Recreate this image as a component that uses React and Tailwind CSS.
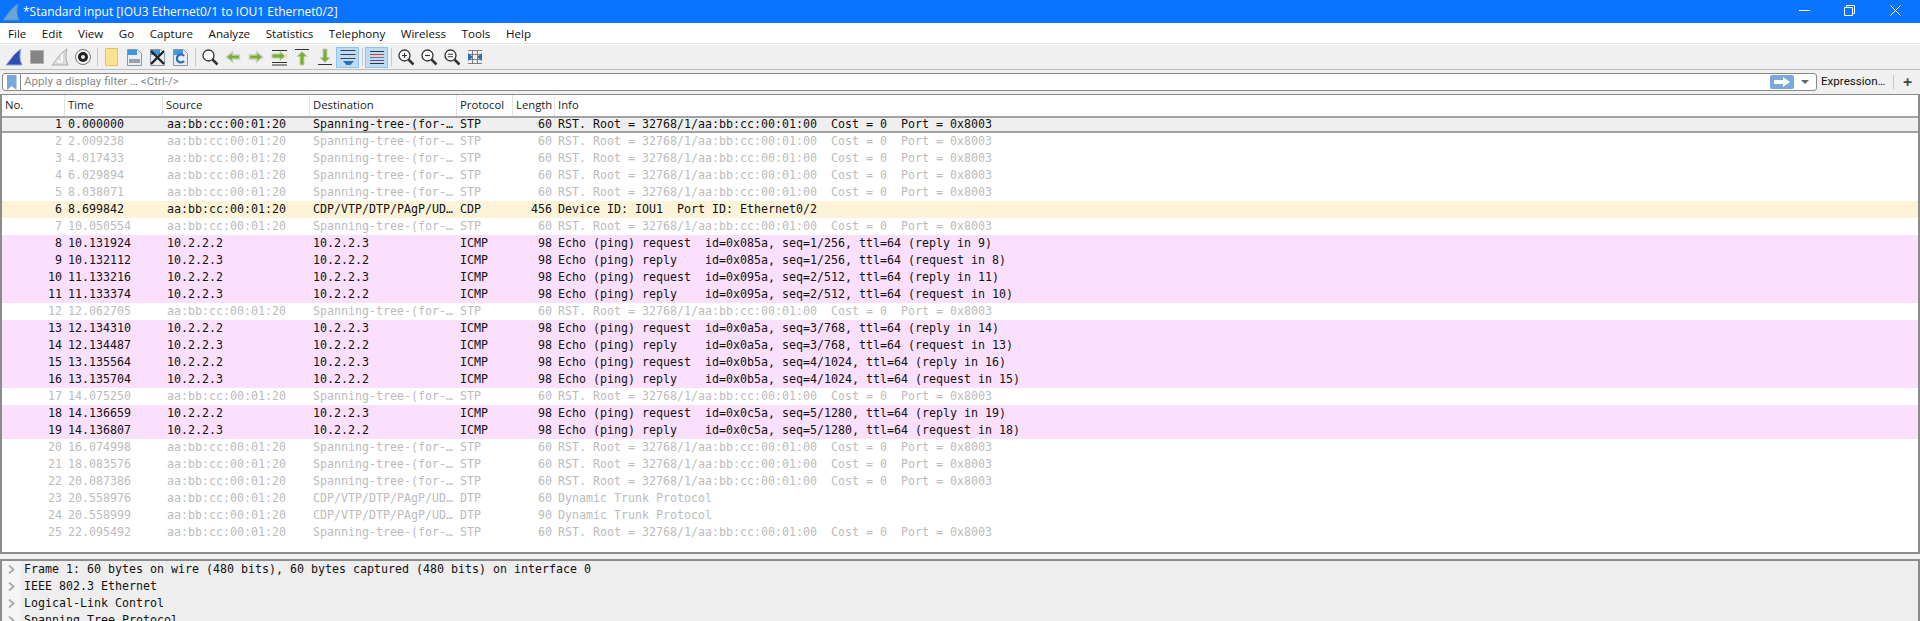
import React from 'react';

const MONO = "font-['DejaVu_Sans_Mono',monospace]";
const UI = "font-['Open_Sans',sans-serif]";
const NARROW = "font-['Roboto',sans-serif]";

const stp = (no, time) => ({
  no, time, src: 'aa:bb:cc:00:01:20', dst: 'Spanning-tree-(for-…', proto: 'STP', len: 60, kind: 'stp',
  info: 'RST. Root = 32768/1/aa:bb:cc:00:01:00  Cost = 0  Port = 0x8003',
});
const ping = (no, time, type, id, seq, ref) => {
  const req = type === 'request';
  return {
    no, time, src: req ? '10.2.2.2' : '10.2.2.3', dst: req ? '10.2.2.3' : '10.2.2.2', proto: 'ICMP', len: 98, kind: 'icmp',
    info: `Echo (ping) ${req ? 'request' : 'reply  '}  id=${id}, seq=${seq}, ttl=64 (${req ? 'reply' : 'request'} in ${ref})`,
  };
};
const dtp = (no, time, len) => ({
  no, time, src: 'aa:bb:cc:00:01:20', dst: 'CDP/VTP/DTP/PAgP/UD…', proto: 'DTP', len, kind: 'stp', info: 'Dynamic Trunk Protocol',
});

const packets = [
  { ...stp(1, '0.000000'), kind: 'selected' },
  stp(2, '2.009238'),
  stp(3, '4.017433'),
  stp(4, '6.029894'),
  stp(5, '8.038071'),
  { no: 6, time: '8.699842', src: 'aa:bb:cc:00:01:20', dst: 'CDP/VTP/DTP/PAgP/UD…', proto: 'CDP', len: 456, kind: 'cdp', info: 'Device ID: IOU1  Port ID: Ethernet0/2' },
  stp(7, '10.050554'),
  ping(8, '10.131924', 'request', '0x085a', '1/256', 9),
  ping(9, '10.132112', 'reply', '0x085a', '1/256', 8),
  ping(10, '11.133216', 'request', '0x095a', '2/512', 11),
  ping(11, '11.133374', 'reply', '0x095a', '2/512', 10),
  stp(12, '12.062705'),
  ping(13, '12.134310', 'request', '0x0a5a', '3/768', 14),
  ping(14, '12.134487', 'reply', '0x0a5a', '3/768', 13),
  ping(15, '13.135564', 'request', '0x0b5a', '4/1024', 16),
  ping(16, '13.135704', 'reply', '0x0b5a', '4/1024', 15),
  stp(17, '14.075250'),
  ping(18, '14.136659', 'request', '0x0c5a', '5/1280', 19),
  ping(19, '14.136807', 'reply', '0x0c5a', '5/1280', 18),
  stp(20, '16.074998'),
  stp(21, '18.083576'),
  stp(22, '20.087386'),
  dtp(23, '20.558976', 60),
  dtp(24, '20.558999', 90),
  stp(25, '22.095492'),
];

const rowStyles = {
  selected: 'bg-[#efefef] text-[#111] border-y-2 border-[#a3a3a3]',
  stp: 'text-[#bcbcbc]',
  cdp: 'bg-[#fdf3d9] text-[#111]',
  icmp: 'bg-[#fbe0fd] text-[#111]',
};

const menus = ['File', 'Edit', 'View', 'Go', 'Capture', 'Analyze', 'Statistics', 'Telephony', 'Wireless', 'Tools', 'Help'];

const headers = [
  ['No.', 'w-[63px]'],
  ['Time', 'w-[98px]'],
  ['Source', 'w-[147px]'],
  ['Destination', 'w-[147px]'],
  ['Protocol', 'w-[56px]'],
  ['Length', 'w-[42px]'],
  ['Info', 'flex-1'],
];

function Fin({ fill = '#2d4fb4', stroke = '#9aa8d4' }) {
  return (
    <svg width="18" height="18" viewBox="0 0 18 18">
      <path d="M1 17C5 13 8 6 16 1c-1.500 5-1.500 11 1 16z" fill={fill} stroke={stroke} strokeWidth="1" />
    </svg>
  );
}

function Magnifier({ sign }) {
  return (
    <svg width="18" height="18" viewBox="0 0 18 18" fill="none" stroke="#333">
      <circle cx="7.5" cy="7.5" r="5.500" strokeWidth="1.3" fill="#fff" />
      <path d="M11.5 11.5L16.500 16.500" strokeWidth="2.5" />
      {sign === 'plus' && <path d="M5 7.5h5M7.5 5v5" strokeWidth="1.2" />}
      {sign === 'minus' && <path d="M5 7.5h5" strokeWidth="1.2" />}
      {sign === 'equal' && <path d="M5 6.2h5M5 8.8h5" strokeWidth="1.1" />}
    </svg>
  );
}

function HArrow({ flip }) {
  return (
    <svg width="18" height="18" viewBox="0 0 18 18" className={flip ? '-scale-x-100' : ''}>
      <path d="M2.500 7h7V4l6 5-6 5v-3h-7z" fill="#6fb52c" stroke="#c9c9bc" strokeWidth="1.4" />
    </svg>
  );
}

function Lines({ children }) {
  return (
    <svg width="18" height="18" viewBox="0 0 18 18">
      {children}
    </svg>
  );
}

function Doc({ children }) {
  return (
    <svg width="15" height="17" viewBox="0 0 15 17">
      <path d="M.5.5h10l4 4v12H.5z" fill="#eaeef2" stroke="#8a96a2" />
      {children}
    </svg>
  );
}

function ToolButton({ children, active }) {
  return (
    <div className={`flex h-[21px] w-[23px] items-center justify-center ${active ? 'bg-[#bcdcf5] border border-[#8cc4f2]' : ''}`}>
      {children}
    </div>
  );
}

const Sep = () => <div className="mx-[2.5px] h-[18px] w-px bg-[#c8c8c8]" />;

function Toolbar() {
  return (
    <div className="flex h-[24px] shrink-0 items-center bg-[#f0f0f0] pl-[2px]">
      <ToolButton><Fin /></ToolButton>
      <ToolButton>
        <div className="h-[14px] w-[14px] border border-[#b0b0b0] bg-[#858585]" />
      </ToolButton>
      <ToolButton>
        <svg width="18" height="18" viewBox="0 0 18 18">
          <path d="M1 17C5 13 8 6 16 1c-1.500 5-1.500 11 1 16z" fill="#dcdcdc" stroke="#ababab" />
          <path d="M11 6v6a2 2 0 0 1-4 0" fill="none" stroke="#fff" strokeWidth="1.6" />
        </svg>
      </ToolButton>
      <ToolButton>
        <svg width="18" height="18" viewBox="0 0 18 18">
          <circle cx="9" cy="9" r="7.500" fill="#f4f4f4" stroke="#777" />
          <circle cx="9" cy="9" r="5" fill="#222" />
          <circle cx="9" cy="9" r="2" fill="#eee" />
        </svg>
      </ToolButton>
      <Sep />
      <ToolButton>
        <svg width="13" height="18" viewBox="0 0 13 18">
          <path d="M.5.5h12v17H.5z" fill="#ffe28f" stroke="#e8c35a" />
        </svg>
      </ToolButton>
      <ToolButton>
        <Doc>
          <path d="M1 1h9v5H1z" fill="#3f96dc" />
          <path d="M2 10h11v4H2z" fill="#9aa0a6" />
        </Doc>
      </ToolButton>
      <ToolButton>
        <Doc>
          <path d="M1 1h9v5H1z" fill="#3f96dc" />
          <path d="M1 2l13 13M14 2L1 15" stroke="#222" strokeWidth="2.400" />
        </Doc>
      </ToolButton>
      <ToolButton>
        <Doc>
          <path d="M1 1h9v5H1z" fill="#3f96dc" />
          <path d="M11 7a4 4 0 1 0 0 5" fill="none" stroke="#2a6cb8" strokeWidth="2.200" />
        </Doc>
      </ToolButton>
      <Sep />
      <ToolButton><Magnifier /></ToolButton>
      <ToolButton><HArrow flip /></ToolButton>
      <ToolButton><HArrow /></ToolButton>
      <ToolButton>
        <Lines>
          <path d="M2 2.500h15M2 14.500h15M2 17h15" stroke="#333" />
          <path d="M2 6h8V3.500L15 8l-5 4.500V10H2z" fill="#6fb52c" stroke="#c9c9bc" />
          <path d="M15 6h2v3h-2z" fill="#f5e37a" />
        </Lines>
      </ToolButton>
      <ToolButton>
        <Lines>
          <path d="M2 1.500h14" stroke="#333" />
          <path d="M9 3.500l5 5h-3V17H7V8.500H4z" fill="#6fb52c" stroke="#c9c9bc" />
        </Lines>
      </ToolButton>
      <ToolButton>
        <Lines>
          <path d="M2 16.500h14" stroke="#333" />
          <path d="M9 14.500l5-5h-3V1H7v8.500H4z" fill="#6fb52c" stroke="#c9c9bc" />
        </Lines>
      </ToolButton>
      <ToolButton active>
        <Lines>
          <path d="M1.500 2.500h15M1.500 6.500h15M1.500 10.500h15" stroke="#444" />
          <path d="M4 13h11l-3.500 4h-4z" fill="#2f6db5" />
        </Lines>
      </ToolButton>
      <Sep />
      <ToolButton active>
        <Lines>
          <path d="M2 3.500h14" stroke="#333" />
          <path d="M2 6.500h14" stroke="#e0353c" />
          <path d="M2 9.500h14" stroke="#777" />
          <path d="M2 12.500h14" stroke="#6b4a8e" />
          <path d="M2 15.500h14" stroke="#333" />
        </Lines>
      </ToolButton>
      <Sep />
      <ToolButton><Magnifier sign="plus" /></ToolButton>
      <ToolButton><Magnifier sign="minus" /></ToolButton>
      <ToolButton><Magnifier sign="equal" /></ToolButton>
      <ToolButton>
        <Lines>
          <path d="M2 2.500h14M2 15.500h14M6.500 2v14M11.500 2v14M2 6.500h14M2 11.500h14" stroke="#666" strokeWidth="0.8" />
          <path d="M2 5l5 4-5 4zM16 5l-5 4 5 4z" fill="#2f6db5" />
        </Lines>
      </ToolButton>
    </div>
  );
}

function FilterBar() {
  return (
    <div className="flex h-[25px] shrink-0 items-center border-t border-[#bdbdbd] bg-[#f0f0f0] pl-[2px]">
      <div className="flex h-[18px] w-[1815px] items-center rounded-[3px] border border-[#8a8a8a] bg-white">
        <div className="flex h-full w-[18px] shrink-0 items-center justify-center border-r border-[#8a8a8a]">
          <svg width="10" height="15" viewBox="0 0 10 15">
            <path d="M0 0h9.500v15L4.750 11 0 15z" fill="#7ba7d9" />
          </svg>
        </div>
        <span className={`${NARROW} flex-1 pl-[3px] text-[11.6px] text-[#8a8a8a]`}>Apply a display filter … &lt;Ctrl-/&gt;</span>
        <div className="flex h-[14px] w-[24px] items-center justify-center rounded-[2px] bg-[#7ba7d9]">
          <svg width="16" height="10" viewBox="0 0 16 10">
            <path d="M0 3h9V0l7 5-7 5V7H0z" fill="#fff" />
          </svg>
        </div>
        <div className="mx-[7px] h-0 w-0 border-x-[4px] border-t-[4px] border-x-transparent border-t-[#666]" />
      </div>
      <span className={`${NARROW} ml-[4px] w-[72px] text-[11.6px] text-[#111]`}>Expression…</span>
      <div className="h-[14px] w-px bg-[#c8c8c8]" />
      <span className={`${UI} pl-[9px] text-[16px] leading-none font-bold text-[#444]`}>+</span>
    </div>
  );
}

function PacketRow({ p }) {
  return (
    <div className={`${MONO} flex h-[17px] items-center whitespace-pre text-[11.63px] ${rowStyles[p.kind]}`}>
      <div className="w-[60px] text-right">{p.no}</div>
      <div className="w-[105px] pl-[6px]">{p.time}</div>
      <div className="w-[146px]">{p.src}</div>
      <div className="w-[147px]">{p.dst}</div>
      <div className="w-[56px]">{p.proto}</div>
      <div className="w-[36px] text-right">{p.len}</div>
      <div className="flex-1 pl-[6px]">{p.info}</div>
    </div>
  );
}

export default function App() {
  return (
    <div className="flex h-[621px] w-[1920px] flex-col overflow-hidden bg-white">
      <div className={`${UI} flex h-[23px] shrink-0 items-center bg-[#0a74fe] text-white`}>
        <div className="ml-[2px] w-[21px]">
          <Fin fill="#6aa5d8" stroke="#5d8fc0" />
        </div>
        <span className="flex-1 text-[12px]">*Standard input [IOU3 Ethernet0/1 to IOU1 Ethernet0/2]</span>
        <svg width="11" height="1" viewBox="0 0 11 1" className="mr-[34px] mb-[3px]"><path d="M0 .5h11" stroke="#fff" /></svg>
        <svg width="11" height="11" viewBox="0 0 11 11" fill="none" stroke="#fff" className="mr-[35px] mb-[3px]">
          <path d="M.5 2.500h8v8h-8zM2.500 2.500v-2h8v8h-2" />
        </svg>
        <svg width="11" height="11" viewBox="0 0 11 11" stroke="#fff" className="mr-[19px] mb-[3px]"><path d="M.5.500l10 10M10.500.500l-10 10" /></svg>
      </div>

      <div className={`${UI} flex h-[20px] shrink-0 items-center gap-[15.5px] pl-[8px] pt-[1px] text-[11.6px] text-[#111]`}>
        {menus.map((m) => <span key={m}>{m}</span>)}
      </div>
      <div className="h-[2px] shrink-0 border-t border-[#e9e9e9] bg-white" />

      <Toolbar />
      <FilterBar />

      <div className="min-h-0 flex-1 border-x-2 border-t border-b-2 border-[#8b8b8b]">
        <div className={`${UI} flex h-[21px] items-center text-[11.3px] text-[#222]`}>
          {headers.map(([label, width], i) => (
            <div key={label} className={`flex h-full items-center pl-[3px] ${width} ${i < 6 ? 'border-r border-[#e3e3e3]' : ''}`}>
              {label}
            </div>
          ))}
        </div>
        {packets.map((p) => <PacketRow key={p.no} p={p} />)}
      </div>

      <div className="h-[5px] shrink-0 bg-[#f0f0f0]" />

      <div className={`${MONO} h-[62px] shrink-0 overflow-hidden border-x-2 border-t-2 border-[#8b8b8b] bg-[#eeeeee] text-[11.63px] text-[#111]`}>
        {['Frame 1: 60 bytes on wire (480 bits), 60 bytes captured (480 bits) on interface 0', 'IEEE 802.3 Ethernet', 'Logical-Link Control', 'Spanning Tree Protocol'].map((t) => (
          <div key={t} className="flex h-[17px] items-center whitespace-pre">
            <div className="flex h-full w-[19px] items-center justify-center bg-[#f5f5f5]">
              <svg width="7" height="9" viewBox="0 0 7 9" fill="none" stroke="#aaaaaa" strokeWidth="1.800"><path d="M1 .5l4.500 4-4.500 4" /></svg>
            </div>
            <span className="pl-[3px]">{t}</span>
          </div>
        ))}
      </div>
    </div>
  );
}
